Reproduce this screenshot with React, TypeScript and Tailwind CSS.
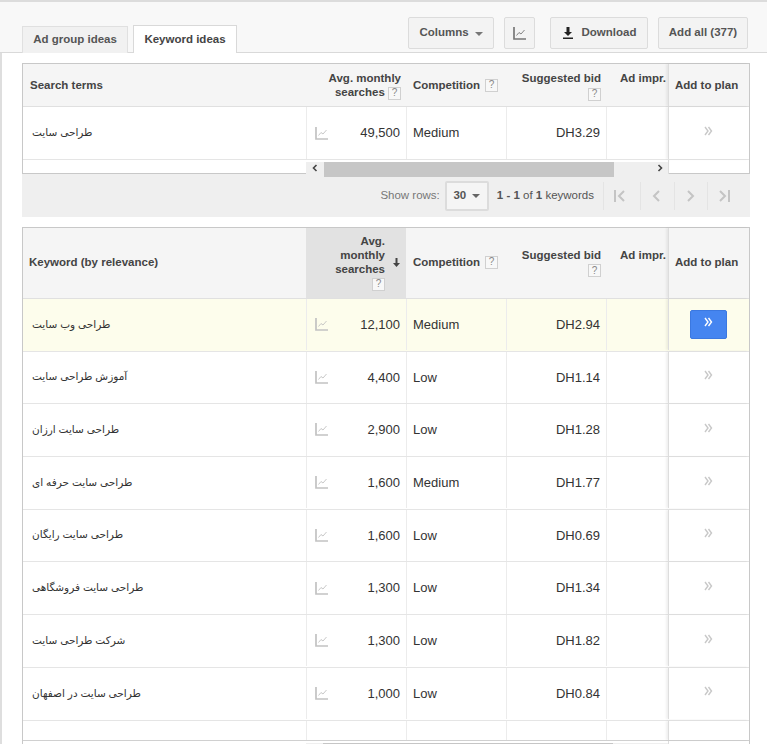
import React from "react";

const FONT = "font-['Liberation_Sans','DejaVu_Sans',sans-serif]";
const COLS = "grid grid-cols-[283px_100px_100px_100px_62px_81px]";

const rows = [
  { term: "طراحی وب سایت", searches: "12,100", comp: "Medium", bid: "DH2.94", hot: true },
  { term: "آموزش طراحی سایت", searches: "4,400", comp: "Low", bid: "DH1.14" },
  { term: "طراحی سایت ارزان", searches: "2,900", comp: "Low", bid: "DH1.28" },
  { term: "طراحی سایت حرفه ای", searches: "1,600", comp: "Medium", bid: "DH1.77" },
  { term: "طراحی سایت رایگان", searches: "1,600", comp: "Low", bid: "DH0.69" },
  { term: "طراحی سایت فروشگاهی", searches: "1,300", comp: "Low", bid: "DH1.34" },
  { term: "شرکت طراحی سایت", searches: "1,300", comp: "Low", bid: "DH1.82" },
  { term: "طراحی سایت در اصفهان", searches: "1,000", comp: "Low", bid: "DH0.84" },
];

const ChartIcon = ({ color = "#c2c2c2" }: { color?: string }) => (
  <svg width="13" height="13" viewBox="0 0 13 13" fill="none">
    <path d="M1 0v12h12" stroke={color} strokeWidth="1.7" />
    <path d="M3.5 8.5 6 5.5l2 1.5 3.5-4" stroke={color} strokeWidth="0.9" />
  </svg>
);

const Help = () => (
  <span className="inline-flex h-[13px] w-[13px] items-center justify-center border border-[#d0d0d0] bg-[#f8f8f8] text-[10px] font-normal leading-none text-[#888]">
    ?
  </span>
);

const Chevrons = ({ color = "#c8c8c8" }: { color?: string }) => (
  <svg width="9" height="10" viewBox="0 0 9 10" fill="none">
    <path d="M1 1l3 4-3 4M4.5 1l3 4-3 4" stroke={color} strokeWidth="1.4" />
  </svg>
);

const Term = ({ text }: { text: string }) => (
  <span dir="rtl" className="text-[10.5px] text-[#333]">
    {text}
  </span>
);

const AddCell = ({ hot }: { hot?: boolean }) => (
  <div className="flex items-center justify-center border-l border-[#ddd] pb-1 pr-[2px] shadow-[-2px_0_2px_rgba(0,0,0,0.06)]">
    {hot ? (
      <div className="mt-[3px] flex h-[29px] w-[37px] items-center justify-center rounded-[2px] border border-[#3b78e0] bg-[#4585f0] pb-1">
        <Chevrons color="#ffffff" />
      </div>
    ) : (
      <Chevrons />
    )}
  </div>
);

const Cells = ({ term, searches, comp, bid, hot }: { term: string; searches: string; comp: string; bid: string; hot?: boolean }) => (
  <>
    <div className="flex items-center pl-[9px]">
      <Term text={term} />
    </div>
    <div className="flex items-center justify-between border-l border-[#ececec] pl-2 pr-[6px]">
      <ChartIcon />
      <span>{searches}</span>
    </div>
    <div className="flex items-center border-l border-[#ececec] pl-[6px]">{comp}</div>
    <div className="flex items-center justify-end border-l border-[#ececec] pr-[6px]">{bid}</div>
    <div className="border-l border-[#ececec]" />
    <AddCell hot={hot} />
  </>
);

const HeadCell = ({ className = "", children }: { className?: string; children: React.ReactNode }) => (
  <div className={`text-[11.5px] font-bold leading-[14px] text-[#444] ${className}`}>{children}</div>
);

const PagerIcon = ({ d, className }: { d: string; className: string }) => (
  <div className={`flex h-[28px] items-center justify-center border-l border-[#e4e4e4] ${className}`}>
    <svg width="16" height="16" viewBox="0 0 16 16" fill="none">
      <path d={d} stroke="#c4c4c4" strokeWidth="2" />
    </svg>
  </div>
);

const ToolButton = ({ className = "", children }: { className?: string; children: React.ReactNode }) => (
  <div className={`flex h-[32px] items-center justify-center rounded-[2px] border border-[#dcdcdc] bg-[#f3f3f3] text-[11.5px] font-bold text-[#555] ${className}`}>
    {children}
  </div>
);

export default function App() {
  return (
    <div className={`${FONT} h-[744px] w-[767px] overflow-hidden border-t-2 border-[#dcdcdc] bg-white`}>
      <div className="flex h-[51px] items-end border-b border-[#d9d9d9] bg-[#f8f8f8] pl-[22px] pr-[19px]">
        <div className="mb-[-1px] mr-[5px] flex h-[27px] w-[106px] items-center justify-center border border-b-0 border-[#e0e0e0] bg-[#f1f1f1] text-[11.5px] font-bold text-[#555]">
          Ad group ideas
        </div>
        <div className="mb-[-1px] flex h-[28px] w-[104px] items-center justify-center border border-b-0 border-[#d9d9d9] bg-white text-[11.5px] font-bold text-[#444]">
          Keyword ideas
        </div>
        <div className="ml-auto flex gap-[10px] self-start pt-[15px]">
          <ToolButton className="w-[86px] gap-[6px]">
            Columns
            <span className="mt-[2px] border-x-[4px] border-t-[4px] border-x-transparent border-t-[#777]" />
          </ToolButton>
          <ToolButton className="mr-[5px] w-[31px]">
            <ChartIcon color="#777" />
          </ToolButton>
          <ToolButton className="w-[98px] gap-[8px]">
            <svg width="12" height="12" viewBox="0 0 12 12">
              <path d="M4.5 0h3v5h2.5L6 9 2 5h2.5zM1 10.5h10V12H1z" fill="#222" />
            </svg>
            Download
          </ToolButton>
          <ToolButton className="w-[90px]">Add all (377)</ToolButton>
        </div>
      </div>

      <div className="border-l-2 border-[#dedede] pl-[20px]">
        <div className="pt-[10px]">
          <div className="w-[728px] border-x border-t border-[#c8c8c8]">
            <div className={`${COLS} h-[43px] border-b border-[#e0e0e0] bg-[#f5f5f5]`}>
              <HeadCell className="flex items-center pl-[7px]">Search terms</HeadCell>
              <HeadCell className="pr-[5px] pt-[7px] text-right">
                Avg. monthly
                <div>searches <Help /></div>
              </HeadCell>
              <HeadCell className="flex items-center gap-[5px] pl-[7px]">
                Competition <Help />
              </HeadCell>
              <HeadCell className="pr-[5px] pt-[7px] text-right">
                Suggested bid
                <div className="mt-[1px]"><Help /></div>
              </HeadCell>
              <HeadCell className="whitespace-nowrap pl-[14px] pt-[7px]">Ad impr.</HeadCell>
              <HeadCell className="flex items-center whitespace-nowrap border-l border-[#ddd] pl-[6px] shadow-[-2px_0_2px_rgba(0,0,0,0.06)]">
                Add to plan
              </HeadCell>
            </div>
            <div className={`${COLS} h-[53px] border-b border-[#e5e5e5] text-[13px] text-[#333]`}>
              <Cells term="طراحی سایت" searches="49,500" comp="Medium" bid="DH3.29" />
            </div>
            <div className={`${COLS} h-[14px] border-b border-[#c8c8c8]`}>
              <div />
              <div className="col-span-4 mt-[2px] flex h-[12px] items-start justify-between bg-[#efefef] pl-[5px] pr-[4px]">
                <svg className="mt-[2px]" width="8" height="8" viewBox="0 0 8 8" fill="none">
                  <path d="M5.5 1 2.5 4l3 3" stroke="#444" strokeWidth="1.6" />
                </svg>
                <div className="relative z-10 ml-[5px] h-[15px] w-[290px] bg-[#c6c6c6]" />
                <div className="flex-1" />
                <svg className="mt-[2px]" width="8" height="8" viewBox="0 0 8 8" fill="none">
                  <path d="M2.5 1l3 3-3 3" stroke="#444" strokeWidth="1.6" />
                </svg>
              </div>
              <div className="border-l border-[#ddd]" />
            </div>
          </div>
        </div>

        <div className="flex h-[43px] w-[728px] items-center justify-end bg-[#efefef] pr-[7px] text-[11.5px] text-[#777]">
          <span className="mr-[5px]">Show rows:</span>
          <div className="mr-[8px] flex h-[30px] w-[44px] items-center justify-center gap-[6px] rounded-[2px] border-2 border-[#dcdcdc] bg-[#f5f5f5] font-bold text-[#555]">
            30
            <span className="border-x-[4px] border-t-[4px] border-x-transparent border-t-[#666]" />
          </div>
          <span className="mr-[9px] text-[#555]">
            <b>1 - 1</b> of <b>1</b> keywords
          </span>
          <PagerIcon className="w-[37px] pr-[4px]" d="M3 2v12M12 3 7 8l5 5" />
          <PagerIcon className="w-[34px] pr-[2px]" d="M10 3 5 8l5 5" />
          <PagerIcon className="w-[33px] pr-[3px]" d="M6 3l5 5-5 5" />
          <PagerIcon className="w-[36px] pr-[3px]" d="M4 3l5 5-5 5M13 2v12" />
        </div>

        <div className="mt-[10px] w-[728px] border-x border-t border-[#c8c8c8]">
          <div className={`${COLS} h-[71px] border-b border-[#e0e0e0] bg-[#f5f5f5]`}>
            <HeadCell className="flex items-center pb-[2px] pl-[6px]">Keyword (by relevance)</HeadCell>
            <HeadCell className="flex items-center justify-end gap-[7px] bg-[#e2e2e2] pb-[1px] pr-[5px]">
              <div className="text-right">
                Avg.
                <div>monthly</div>
                <div>searches</div>
                <div><Help /></div>
              </div>
              <svg width="9" height="9" viewBox="0 0 9 9">
                <path d="M3.5 0h2v5H8L4.5 9 1 5h2.5z" fill="#444" />
              </svg>
            </HeadCell>
            <HeadCell className="flex items-center gap-[5px] pb-[2px] pl-[7px]">
              Competition <Help />
            </HeadCell>
            <HeadCell className="flex flex-col justify-center pb-[1px] pr-[5px] text-right">
              Suggested bid
              <div className="mt-[1px]"><Help /></div>
            </HeadCell>
            <HeadCell className="whitespace-nowrap pl-[14px] pt-[20px]">Ad impr.</HeadCell>
            <HeadCell className="flex items-center whitespace-nowrap border-l border-[#ddd] pb-[2px] pl-[6px] shadow-[-2px_0_2px_rgba(0,0,0,0.06)]">
              Add to plan
            </HeadCell>
          </div>
          {rows.map((row) => (
            <div key={row.term} className={`${COLS} h-[52.7px] border-b border-[#e5e5e5] pb-[0.5px] text-[13px] text-[#333] ${row.hot ? "bg-[#fdfdec]" : ""}`}>
              <Cells {...row} />
            </div>
          ))}
          <div className={`${COLS} h-[20px] border-b border-[#d0d0d0]`}>
            <div />
            <div className="border-l border-[#ececec]" />
            <div className="border-l border-[#ececec]" />
            <div className="border-l border-[#ececec]" />
            <div className="border-l border-[#ececec]" />
            <div className="border-l border-[#ddd] shadow-[-2px_0_2px_rgba(0,0,0,0.06)]" />
          </div>
          <div className={`${COLS} h-[12px]`}>
            <div />
            <div className="col-span-4 mt-[2px] bg-[#efefef] pl-[17px]">
              <div className="h-[10px] w-[290px] bg-[#c6c6c6]" />
            </div>
            <div className="border-l border-[#ddd]" />
          </div>
        </div>
      </div>
    </div>
  );
}
